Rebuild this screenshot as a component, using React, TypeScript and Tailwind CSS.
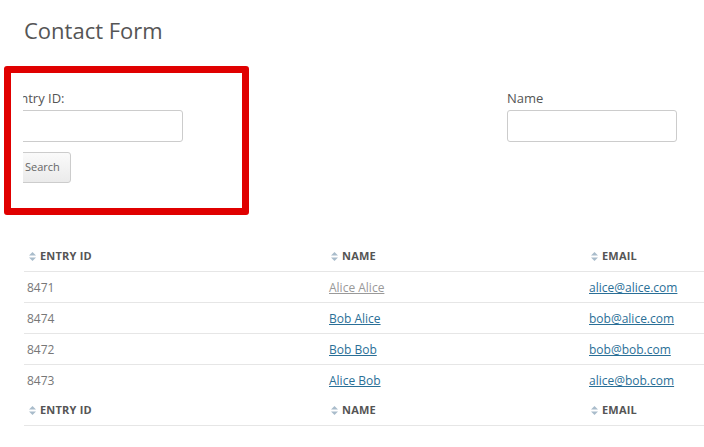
const rows = [
  { id: '8471', name: 'Alice Alice', email: 'alice@alice.com', muted: true },
  { id: '8474', name: 'Bob Alice', email: 'bob@alice.com' },
  { id: '8472', name: 'Bob Bob', email: 'bob@bob.com' },
  { id: '8473', name: 'Alice Bob', email: 'alice@bob.com' },
];

const SortIcon = () => (
  <svg width="7" height="9" viewBox="0 0 7 9" className="mr-[4px] shrink-0">
    <path d="M3.5 0 L7 3.6 H0 Z" fill="#a9bccb" />
    <path d="M3.5 9 L7 5.4 H0 Z" fill="#a9bccb" />
  </svg>
);

const HeaderRow = () => (
  <div className="flex h-[31px] items-center border-b border-[#e6e6e6] text-[11px] font-bold tracking-[0.2px] text-[#555]">
    <div className="flex w-[302px] items-center pl-[5px]"><SortIcon />ENTRY ID</div>
    <div className="flex w-[260px] items-center pl-[5px]"><SortIcon />NAME</div>
    <div className="flex flex-1 items-center pl-[5px]"><SortIcon />EMAIL</div>
  </div>
);

export default function App() {
  return (
    <div className="relative h-[447px] w-[704px] overflow-hidden bg-white font-['Open_Sans',sans-serif] text-[#777]">
      <h1 className="pl-[24px] pt-[15px] text-[22px] leading-[30px] text-[#555]">Contact Form</h1>

      <div className="mt-[44px] flex">
        <div className="ml-[23px] w-[220px] overflow-hidden">
          <div className="-ml-[10px]">
            <label className="block text-[13px] leading-[18px] text-[#555]">Entry ID:</label>
            <input className="mt-[3px] h-[32px] w-[170px] rounded-[3px] border border-[#ccc] bg-white outline-none" />
            <button className="mt-[10px] block h-[31px] w-[58px] rounded-[3px] border border-[#ccc] bg-gradient-to-b from-[#fafafa] to-[#ebebeb] pl-[11px] text-left text-[11px] text-[#666]">
              Search
            </button>
          </div>
        </div>
        <div className="ml-[264px]">
          <label className="block text-[13px] leading-[18px] text-[#555]">Name</label>
          <input className="mt-[3px] h-[32px] w-[170px] rounded-[3px] border border-[#ccc] bg-white outline-none" />
        </div>
      </div>

      <div className="absolute left-[4px] top-[66px] h-[149px] w-[245px] rounded-[3px] border-[7px] border-[#e00000]" />

      <div className="ml-[24px] mt-[58px] w-[680px] text-[12px]">
        <HeaderRow />
        {rows.map((r, i) => (
          <div
            key={r.id}
            className={`flex items-center pt-[2px] ${i < rows.length - 1 ? 'h-[31px] border-b border-[#e6e6e6]' : 'h-[30px]'}`}
          >
            <div className="w-[302px] pl-[3px]">{r.id}</div>
            <div className="w-[260px] pl-[3px]">
              <a className={`underline ${r.muted ? 'text-[#999]' : 'text-[#2a6f97]'}`}>{r.name}</a>
            </div>
            <div className="flex-1 pl-[3px]">
              <a className="text-[#2a6f97] underline">{r.email}</a>
            </div>
          </div>
        ))}
        <HeaderRow />
      </div>
    </div>
  );
}
